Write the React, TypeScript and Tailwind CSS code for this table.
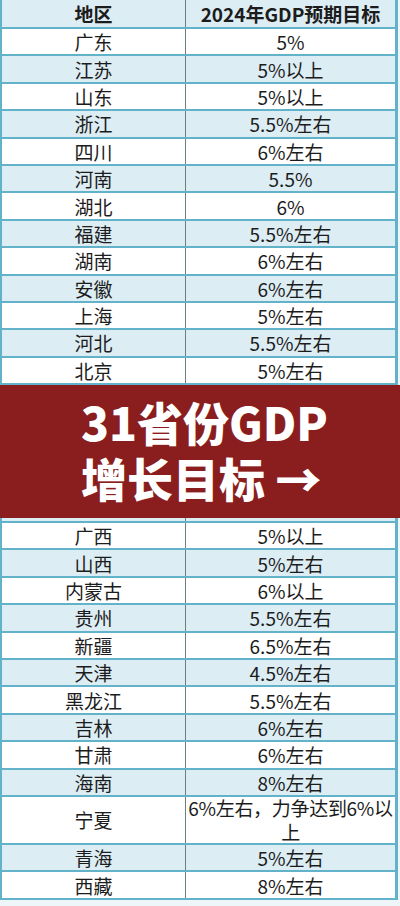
import React from "react";

type Row = { r: string; v: React.ReactNode; tall?: boolean };

const top: Row[] = [
  { r: "广东", v: "5%" },
  { r: "江苏", v: "5%以上" },
  { r: "山东", v: "5%以上" },
  { r: "浙江", v: "5.5%左右" },
  { r: "四川", v: "6%左右" },
  { r: "河南", v: "5.5%" },
  { r: "湖北", v: "6%" },
  { r: "福建", v: "5.5%左右" },
  { r: "湖南", v: "6%左右" },
  { r: "安徽", v: "6%左右" },
  { r: "上海", v: "5%左右" },
  { r: "河北", v: "5.5%左右" },
  { r: "北京", v: "5%左右" },
];

const bottom: Row[] = [
  { r: "广西", v: "5%以上" },
  { r: "山西", v: "5%左右" },
  { r: "内蒙古", v: "6%以上" },
  { r: "贵州", v: "5.5%左右" },
  { r: "新疆", v: "6.5%左右" },
  { r: "天津", v: "4.5%左右" },
  { r: "黑龙江", v: "5.5%左右" },
  { r: "吉林", v: "6%左右" },
  { r: "甘肃", v: "6%左右" },
  { r: "海南", v: "8%左右" },
  {
    r: "宁夏",
    v: (
      <div className="flex flex-col items-center whitespace-nowrap tracking-[-0.3px] leading-[24px]">
        <span>6%左右，力争达到6%以</span>
        <span>上</span>
      </div>
    ),
    tall: true,
  },
  { r: "青海", v: "5%左右" },
  { r: "西藏", v: "8%左右" },
];

function TRow({ row, blue, header }: { row: Row; blue: boolean; header?: boolean }) {
  return (
    <div
      className={`flex box-border border-b-2 border-[#62b2ca] ${blue ? "bg-[#dcedf4]" : "bg-white"} ${
        row.tall ? "h-[48px]" : header ? "h-[29px]" : "h-[27.4px]"
      } ${header ? "font-bold" : "font-normal"}`}
    >
      <div className="w-[184px] shrink-0 flex items-center justify-center border-r-[1.5px] border-[#6f7d82]">
        {row.r}
      </div>
      <div className="flex-1 flex items-center justify-center text-center">
        {row.v}
      </div>
    </div>
  );
}

export default function App() {
  return (
    <div
      className="w-[400px] h-[906px] overflow-hidden bg-[#eef6f9] text-[19px] text-[#1c1c1c] leading-none"
      style={{ fontFamily: '"Noto Sans CJK SC", "Noto Sans", sans-serif' }}
    >
      <div className="w-[398px] box-border border-l-2 border-r-[3px] border-[#62b2ca]">
        <TRow row={{ r: "地区", v: "2024年GDP预期目标" }} blue header />
        {top.map((row, i) => (
          <TRow key={row.r} row={row} blue={i % 2 === 1} />
        ))}
      </div>
      <div className="w-[400px] h-[133px] bg-[#8a1d1d] flex flex-col justify-center pl-[81px] pb-[6px] text-white font-black text-[46px] leading-[56px]">
        <div>31省份GDP</div>
        <div>增长目标 →</div>
      </div>
      <div className="w-[398px] box-border border-l-2 border-r-[3px] border-[#62b2ca]">
        <div className="h-[5px] box-border border-b-2 border-[#62b2ca] bg-[#dcedf4] flex">
          <div className="w-[184px] border-r-[1.5px] border-[#6f7d82]" />
        </div>
        {bottom.map((row, i) => (
          <TRow key={row.r} row={row} blue={i % 2 === 1} />
        ))}
      </div>
    </div>
  );
}
